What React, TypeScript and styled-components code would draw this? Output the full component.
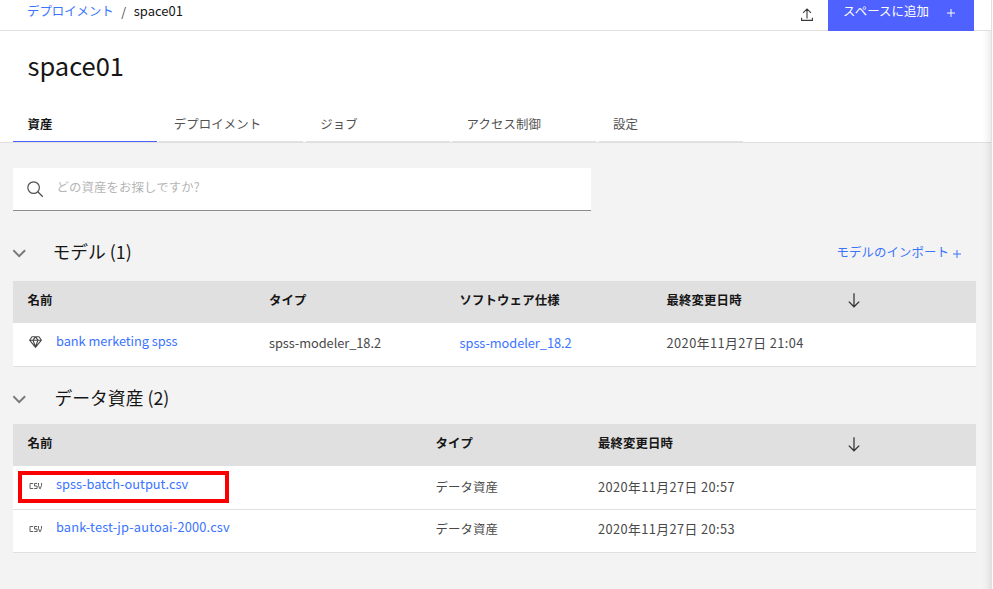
import React from "react";
import styled, { createGlobalStyle, css } from "styled-components";

const Global = createGlobalStyle`
  * { box-sizing: border-box; }
  html, body { margin: 0; padding: 0; }
  body {
    width: 993px;
    height: 589px;
    overflow: hidden;
    background: #fff;
    font-family: "Noto Sans CJK JP", "Noto Sans", sans-serif;
    -webkit-font-smoothing: antialiased;
  }
  svg { display: block; }
`;

const Page = styled.div`
  position: relative;
  width: 992px;
  height: 589px;
  border-right: 1px solid #e0e0e0;
  background: #f3f3f3;
  overflow: hidden;
`;

const EdgeShadow = styled.div`
  position: absolute;
  top: 31px;
  right: 0;
  bottom: 0;
  width: 10px;
  background: linear-gradient(to right, rgba(0, 0, 0, 0), rgba(0, 0, 0, 0.02) 50%, rgba(0, 0, 0, 0.07));
`;

type LabelProps = { $size?: number; $track?: number; $drop?: number; $tone?: string; $bold?: boolean };

const Label = styled.span<LabelProps>`
  display: inline-block;
  white-space: pre;
  line-height: 20px;
  font-size: ${(p) => p.$size ?? 12.4}px;
  letter-spacing: ${(p) => p.$track ?? 0.12}px;
  margin-top: ${(p) => p.$drop ?? 0}px;
  color: ${(p) => p.$tone ?? "#484848"};
  font-weight: ${(p) => (p.$bold ? 700 : 400)};
`;

const Link = styled(Label).attrs({ as: "a" })`
  color: #3a74ff;
`;

const ImportLink = styled(Link)`
  margin-right: 4px;
`;

const TopBar = styled.header`
  display: flex;
  height: 31px;
  padding-right: 17px;
  border-bottom: 1px solid #e0e0e0;
  background: #fff;
`;

const Breadcrumb = styled.nav`
  display: flex;
  flex: 1;
  padding: 1px 0 0 27px;
`;

const Slash = styled(Label)`
  width: 20px;
  text-align: center;
`;

const IconSlot = styled.div<{ $w: number; $top: number }>`
  width: ${(p) => p.$w}px;
  padding-top: ${(p) => p.$top}px;
  flex: none;
`;

const AddButton = styled.button`
  display: flex;
  justify-content: space-between;
  width: 146px;
  height: 31px;
  padding: 1px 19px 0 15px;
  border: 0;
  background: #4f61ff;
  font-family: inherit;
`;

const Header = styled.section`
  height: 112px;
  background: #fff;
  border-bottom: 1px solid #e0e0e0;
`;

const Title = styled.h1`
  margin: 0;
  height: 76px;
  padding: 14px 0 0 27.5px;
  font-size: 25.5px;
  font-weight: 400;
  line-height: 40px;
  letter-spacing: 0;
  color: #161616;
`;

const Tabs = styled.div`
  display: grid;
  grid-template-columns: repeat(5, 144px);
  column-gap: 2.4px;
  padding-left: 13px;
  height: 35px;
`;

const Tab = styled.div<{ $active?: boolean }>`
  height: 35px;
  padding: 3px 0 0 14.4px;
  border-bottom: 1px solid ${(p) => (p.$active ? "#4f61ff" : "#e0e0e0")};
`;

const Body = styled.main`
  padding: 25px 15px 0 13px;
`;

const Search = styled.div`
  display: flex;
  width: 578px;
  height: 43px;
  padding-left: 13.5px;
  background: #fff;
  border-bottom: 1px solid #8d8d8d;
`;

const SectionHead = styled.div<{ $h: number; $top: number; $gap: number }>`
  display: flex;
  height: ${(p) => p.$h}px;
  padding: ${(p) => p.$top}px 14px 0 0;
  ${(p) => css`
    > h2 { margin-left: ${p.$gap}px; }
  `}
`;

const SectionTitle = styled.h2`
  margin: 0;
  flex: 1;
  font-size: 17.8px;
  font-weight: 400;
  line-height: 26px;
  white-space: pre;
  color: #161616;
`;

const Row = styled.div<{ $cols: string; $h: number; $head?: boolean }>`
  display: grid;
  grid-template-columns: ${(p) => p.$cols};
  align-items: start;
  width: 963px;
  height: ${(p) => p.$h}px;
  padding: ${(p) => (p.$head ? 9 : 10)}px 0 0 14.6px;
  background: ${(p) => (p.$head ? "#e0e0e0" : "#fff")};
  border-bottom: ${(p) => (p.$head ? "0" : "1px solid #e0e0e0")};
`;

const NameCell = styled.div`
  display: flex;
`;

const Highlight = styled.div`
  position: absolute;
  left: 18px;
  top: 471px;
  width: 211px;
  height: 32px;
  border: 4px solid #fb0000;
`;

const modelCols = "241.4px 190.6px 207px 181.4px 1fr";
const dataCols = "407.8px 162.5px 250.1px 1fr";

const Chevron = () => (
  <svg width="14" height="9" viewBox="0 0 14 9">
    <path d="M.3 1.2l5.9 5.9 5.9-5.9" fill="none" stroke="#787878" strokeWidth="2" />
  </svg>
);

const ArrowDown = () => (
  <svg width="12" height="15" viewBox="0 0 12 15">
    <path d="M6 0.3v13M.8 8.6L6 13.8l5.2-5.2" fill="none" stroke="#333" strokeWidth="1.25" />
  </svg>
);

const Upload = () => (
  <svg width="12" height="14" viewBox="0 0 12 14">
    <path d="M6 10.5V1M2 4.8L6 .9l4 3.9M.6 9.8v2.6h10.8V9.8" fill="none" stroke="#393939" strokeWidth="1.1" />
  </svg>
);

const Plus = ({ color }: { color: string }) => (
  <svg width="8" height="8" viewBox="0 0 8 8">
    <path d="M4 0v8M0 4h8" stroke={color} strokeWidth="1" />
  </svg>
);

const Magnifier = () => (
  <svg width="17" height="17" viewBox="0 0 17 17">
    <circle cx="6.6" cy="6.6" r="5.8" fill="none" stroke="#525252" strokeWidth="1.2" />
    <path d="M10.8 10.8l5 5" stroke="#525252" strokeWidth="1.3" />
  </svg>
);

const Gem = () => (
  <svg width="14" height="12" viewBox="-1 0 14 12">
    <path
      d="M3 .7h7l2.4 3.5-5.9 7.1L.6 4.2zM.6 4.2h11.8M6.5.9L4 4.2l2.5 6.6L9 4.2z"
      fill="none"
      stroke="#484848"
      strokeWidth="1.1"
      strokeLinejoin="round"
    />
  </svg>
);

const CsvIcon = () => (
  <svg width="14" height="8" viewBox="-1 0 14 8">
    <path
      d="M4.2 1.5H1v5h3.2M8.2 1.5H5.5V4h2.6v2.5H5.2M9.5 1v2.5l1.3 3.3h.4l1.3-3.3V1"
      fill="none"
      stroke="#606060"
      strokeWidth="1"
    />
  </svg>
);

const files = [
  { name: "spss-batch-output.csv", time: "2020年11月27日 20:57", h: 44, track: 0, nameDrop: -2, drop: 1, iconTop: 6 },
  { name: "bank-test-jp-autoai-2000.csv", time: "2020年11月27日 20:53", h: 43, track: 0.18, nameDrop: -3, drop: -1, iconTop: 5 },
];

export default function App() {
  return (
    <>
      <Global />
      <Page>
        <TopBar>
          <Breadcrumb>
            <Link $track={0}>デプロイメント</Link>
            <Slash $drop={1}>/</Slash>
            <Label $size={13} $track={0} $tone="#161616">space01</Label>
          </Breadcrumb>
          <IconSlot $w={27} $top={8}><Upload /></IconSlot>
          <AddButton>
            <Label $tone="#fff">スペースに追加</Label>
            <IconSlot $w={8} $top={8}><Plus color="#fff" /></IconSlot>
          </AddButton>
        </TopBar>
        <Header>
          <Title>space01</Title>
          <Tabs>
            <Tab $active><Label $bold $tone="#161616">資産</Label></Tab>
            <Tab><Label $tone="#525252">デプロイメント</Label></Tab>
            <Tab><Label $tone="#525252">ジョブ</Label></Tab>
            <Tab><Label $tone="#525252">アクセス制御</Label></Tab>
            <Tab><Label $tone="#525252">設定</Label></Tab>
          </Tabs>
        </Header>
        <Body>
          <Search>
            <IconSlot $w={30} $top={12.5}><Magnifier /></IconSlot>
            <Label $drop={9} $tone="#b5b5b5">どの資産をお探しですか?</Label>
          </Search>
          <SectionHead $h={70} $top={27} $gap={25.5}>
            <IconSlot $w={14} $top={11}><Chevron /></IconSlot>
            <SectionTitle>モデル (1)</SectionTitle>
            <ImportLink $drop={4}>モデルのインポート</ImportLink>
            <IconSlot $w={9} $top={12}><Plus color="#3a74ff" /></IconSlot>
          </SectionHead>
          <Row $head $cols={modelCols} $h={42}>
            <Label $bold $tone="#161616">名前</Label>
            <Label $bold $tone="#161616">タイプ</Label>
            <Label $bold $tone="#161616">ソフトウェア仕様</Label>
            <Label $bold $tone="#161616">最終変更日時</Label>
            <IconSlot $w={12} $top={3}><ArrowDown /></IconSlot>
          </Row>
          <Row $cols={modelCols} $h={44}>
            <NameCell>
              <IconSlot $w={28.4} $top={3}><Gem /></IconSlot>
              <Link $size={12.8} $track={-0.05} $drop={-2}>bank merketing spss</Link>
            </NameCell>
            <Label $size={12.8} $track={-0.05}>spss-modeler_18.2</Label>
            <Link $size={12.8} $track={-0.05}>spss-modeler_18.2</Link>
            <Label $size={12.8} $track={0.42}>2020年11月27日 21:04</Label>
          </Row>
          <SectionHead $h={57} $top={17} $gap={27.5}>
            <IconSlot $w={14} $top={11}><Chevron /></IconSlot>
            <SectionTitle>データ資産 (2)</SectionTitle>
          </SectionHead>
          <Row $head $cols={dataCols} $h={42}>
            <Label $bold $tone="#161616">名前</Label>
            <Label $bold $tone="#161616">タイプ</Label>
            <Label $bold $tone="#161616">最終変更日時</Label>
            <IconSlot $w={12} $top={4}><ArrowDown /></IconSlot>
          </Row>
          {files.map((f) => (
            <Row key={f.name} $cols={dataCols} $h={f.h}>
              <NameCell>
                <IconSlot $w={28.4} $top={f.iconTop}><CsvIcon /></IconSlot>
                <Link $size={12.8} $track={f.track} $drop={f.nameDrop}>{f.name}</Link>
              </NameCell>
              <Label $drop={f.drop}>データ資産</Label>
              <Label $size={12.8} $track={0.42} $drop={f.drop}>{f.time}</Label>
            </Row>
          ))}
        </Body>
        <EdgeShadow />
        <Highlight />
      </Page>
    </>
  );
}
